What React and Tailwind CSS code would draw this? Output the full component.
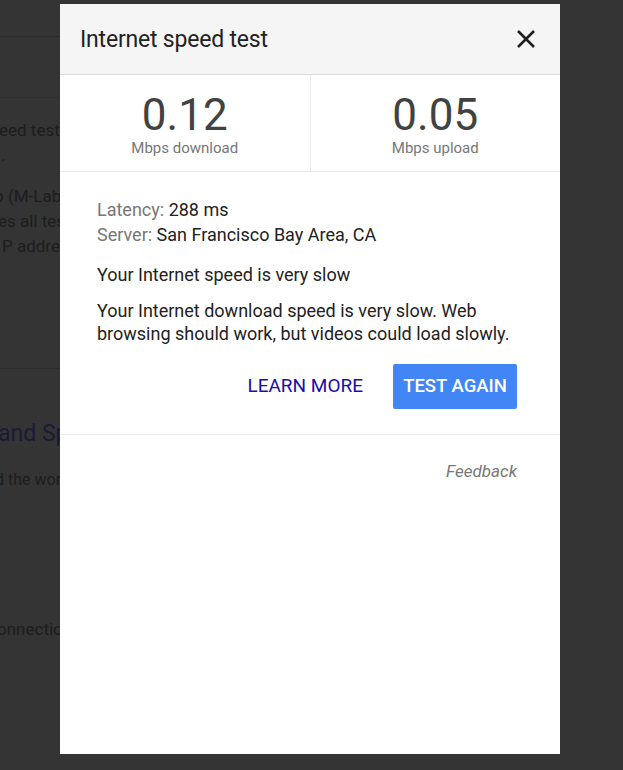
import React from "react";

export default function App() {
  return (
    <div
      className="relative w-[623px] h-[770px] overflow-hidden bg-[#343434]"
      style={{ fontFamily: "Roboto, 'Noto Sans', sans-serif" }}
    >
      {/* Background page (dimmed) */}
      <div className="w-[300px] text-[#1d1d1d]">
        <div className="h-[37px] border-b border-[#2b2b2b]" />
        <div className="h-[61px] border-b border-[#2f2f2f]" />
        <div className="pt-[20px] text-[17px] leading-[25px] whitespace-nowrap">
          <div className="ml-[-1px]">eed test</div>
          <div className="ml-[1px]">.</div>
          <div className="mt-[16px] ml-[-6px]">o (M-Lab</div>
          <div className="ml-[-2px]">es all tes</div>
          <div className="ml-[2px]">P addre</div>
        </div>
        <div className="h-[110px] border-b border-[#2c2c2c]" />
        <div className="mt-[50px] ml-[-2px] text-[23px] leading-[30px] text-[#1a1a36] whitespace-nowrap">
          and Sp
        </div>
        <div className="mt-[19px] ml-[-5px] text-[16px] leading-[24px] whitespace-nowrap">
          d the wor
        </div>
        <div className="mt-[125px] ml-[-3px] text-[17px] leading-[24px] whitespace-nowrap">
          onnectio
        </div>
      </div>

      {/* Modal */}
      <div className="absolute left-[60px] top-[4px] w-[500px] h-[750px] bg-white flex flex-col">
        <div className="h-[71px] bg-[#f5f5f5] border-b border-[#dadada] flex items-center justify-between pl-[20px] pr-[24px]">
          <div className="text-[23px] text-[#222] tracking-[-0.2px] pt-[2px]">Internet speed test</div>
          <svg width="20" height="20" viewBox="0 0 20 20" className="text-[#202020]">
            <path d="M2 2 L18 18 M18 2 L2 18" stroke="currentColor" strokeWidth="2.6" />
          </svg>
        </div>

        <div className="h-[97px] flex border-b border-[#eaeaea]">
          <div className="flex-1 flex flex-col items-center pt-[16px] border-r border-[#eaeaea]">
            <div className="text-[44px] leading-[48px] text-[#424242]">0.12</div>
            <div className="text-[15px] leading-[18px] text-[#777]">Mbps download</div>
          </div>
          <div className="flex-1 flex flex-col items-center pt-[16px]">
            <div className="text-[44px] leading-[48px] text-[#424242]">0.05</div>
            <div className="text-[15px] leading-[18px] text-[#777]">Mbps upload</div>
          </div>
        </div>

        <div className="pl-[37px] pr-[43px] pt-[25px] text-[18px] text-[#222]">
          <div className="leading-[25px]">
            <span className="text-[#777]">Latency: </span>288 ms
          </div>
          <div className="leading-[25px]">
            <span className="text-[#777]">Server: </span>San Francisco Bay Area, CA
          </div>
          <div className="mt-[15px] leading-[25px]">Your Internet speed is very slow</div>
          <div className="mt-[12px] leading-[23px]">
            Your Internet download speed is very slow. Web browsing should work, but videos could load slowly.
          </div>
          <div className="mt-[19px] flex items-center justify-end gap-[30px]">
            <div className="text-[19px] text-[#1a0dab] uppercase">Learn more</div>
            <div className="h-[45px] w-[124px] justify-center rounded-[2px] bg-[#4285f4] text-white text-[18.5px] flex items-center uppercase font-medium">
              Test again
            </div>
          </div>
        </div>

        <div className="mt-[25px] border-b border-[#ebebeb]" />
        <div className="pr-[43px] pt-[24px] text-right text-[17px] italic text-[#777]">Feedback</div>
      </div>
    </div>
  );
}
